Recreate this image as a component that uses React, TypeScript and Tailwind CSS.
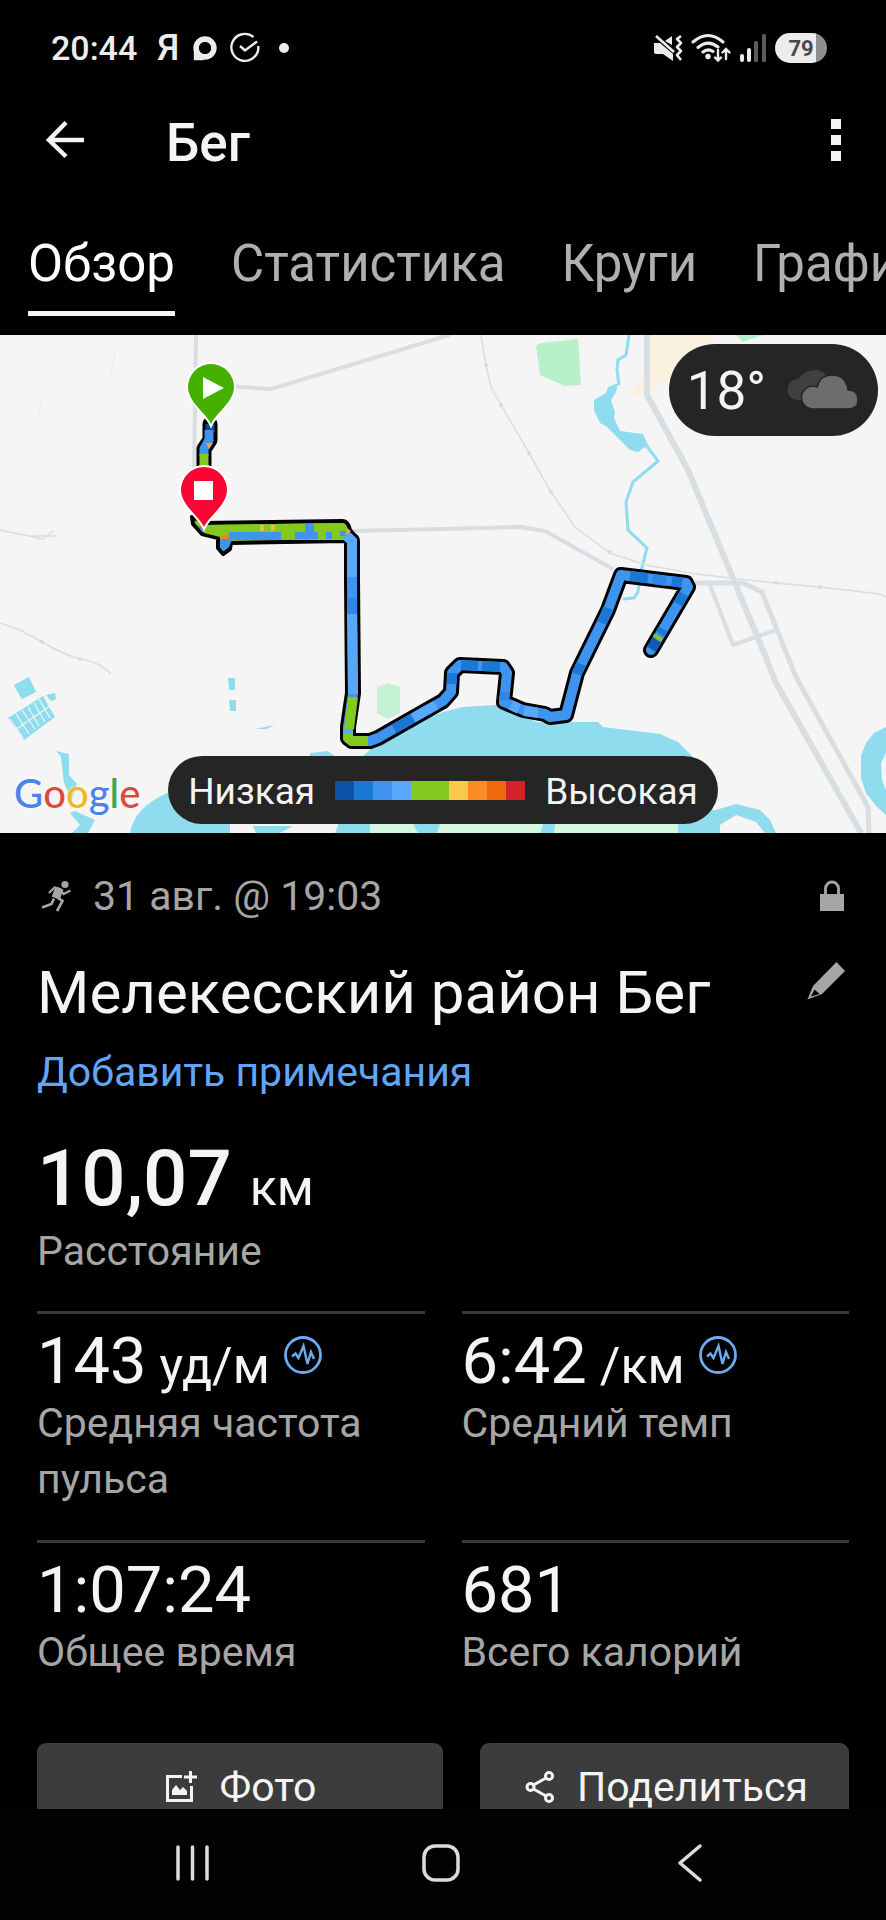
import React, { ReactNode } from "react"

const tabs = ["Обзор", "Статистика", "Круги", "Графики"]

const legendColors = [
    "#0b51a8", "#1b77d4", "#3e94ef", "#57a8fb", "#84c91f",
    "#84c91f", "#fbc94a", "#fb8c25", "#ec6a0c", "#d32226",
]

const route =
    "352,541 352,580 353,693 348,727 348,738 352,741 370,741 378,738 443,701 451,692 452,673 460,665 503,667 507,673 504,702 523,710 545,714 550,717 566,715 577,673 608,610 618,583 621,575 686,583 688,587 651,650"

const routeParts: [string, string][] = [
    ["352,545 352,577", "#57a8fb"],
    ["352,598 352,614", "#2f86e4"],
    ["352,614 353,694", "#57a8fb"],
    ["353,697 349,729", "#84c91f"],
    ["348,729 348,734", "#57a8fb"],
    ["348,734 348,738 352,741 368,741", "#84c91f"],
    ["394,729 413,718", "#1b77d4"],
    ["413,718 436,705", "#57a8fb"],
    ["452,684 452,673", "#1b77d4"],
    ["461,665 478,666", "#1b77d4"],
    ["482,666 500,667", "#1b77d4"],
    ["505,692 504,700", "#2f86e4"],
    ["511,705 519,709", "#57a8fb"],
    ["524,711 538,713", "#57a8fb"],
    ["577,674 581,664", "#1b77d4"],
    ["602,623 608,608", "#1b77d4"],
    ["630,576 648,578", "#1b77d4"],
    ["653,579 666,581", "#2f86e4"],
    ["672,581 682,583", "#1b77d4"],
    ["684,594 678,604", "#1b77d4"],
    ["663,629 660,634", "#1b77d4"],
    ["659,636 657,639", "#84c91f"],
    ["657,640 651,649", "#0f5bb5"],
]

const Track: React.FC = () => (
    <g fill="none" strokeLinejoin="round" strokeLinecap="round">
        <path d="M210 424V440L204 449V475" stroke="#000" strokeWidth="15" />
        <path d="M192 517L203 523L343 521Q348 521 350 530L357 538V545L346 541L231 543L230 549L223 554L218 548V538L202 534L193 524Z" fill="#84c91f" stroke="#000" strokeWidth="4" />
        <polyline points={route} stroke="#000" strokeWidth="16" />
        <polyline points={route} stroke="#3e94ef" strokeWidth="10" />
        {routeParts.map(([points, color]) => (
            <polyline key={points} points={points} stroke={color} strokeWidth="10" strokeLinecap="butt" />
        ))}
        <path d="M210 424V432" stroke="#10498f" strokeWidth="9" strokeLinecap="butt" />
        <path d="M209 430V440L204 449V456" stroke="#3e94ef" strokeWidth="9" strokeLinecap="butt" />
        <path d="M204 454V475" stroke="#84c91f" strokeWidth="9" strokeLinecap="butt" />
        <path d="M206 443H213L209 449Z" fill="#f2a646" />
        <path d="M195 520L206 525L343 523L348 532L345 540H231L220 537L204 533Z" fill="#84c91f" />
        <path d="M342 539L349 531L357 539V548H347V543Z" fill="#57a8fb" />
        <path d="M229 532H281V540H232L229 547L223 551L220 547V539H229Z" fill="#3e94ef" />
        <path d="M295 532H318V539H295ZM305 524H314V532H305ZM326 532H332V539H326ZM340 531H347V536H340Z" fill="#3e94ef" />
        <path d="M260 525H264V531H260ZM271 525H275V531H271Z" fill="#e5bd45" />
        <path d="M221 536L229 535V539H221Z" fill="#f07f2c" />
        <path d="M347 528L351 531L345 536Z" fill="#f2a646" />
        <path d="M198 526L206 528L202 532Z" fill="#5b8fc0" />
    </g>
)

const Pin: React.FC<{ x: number; y: number; color: string; children: ReactNode }> = ({ x, y, color, children }) => (
    <g transform={`translate(${x} ${y})`}>
        <path d="M0 1C-5 -10 -23 -21 -23 -36A23 23 0 1 1 23 -36C23 -21 5 -10 0 1Z" fill={color} stroke="#fff" strokeWidth="4" paintOrder="stroke" />
        {children}
    </g>
)

const MapCanvas: React.FC = () => (
    <svg className="block h-full w-full" viewBox="0 335 886 498" preserveAspectRatio="xMidYMid slice" role="img" aria-label="Карта">
        <rect y="335" width="886" height="498" fill="#f5f5f5" />

        <path d="M651 335H716L700 355L675 375L645 397L630 394L646 373Z" fill="#fbf1df" />
        <path d="M736 335H763L743 342ZM536 346L541 343L578 339L581 385L565 386L540 375Z" fill="#b7f0c9" />
        <path d="M377 687L388 683L400 687V713L388 719L377 713Z" fill="#c3f1d2" />

        <g fill="#8fdcee">
            <path d="M608 387L618 383L616 392L611 400L615 412L614 418L620 431L643 434L648 445L638 452L630 450L606 426L600 423L594 410V400L606 393Z" />
            <path d="M350 833V770L363 756L373 747L393 733L443 712L463 707L496 705L536 722L598 722L603 727L660 734L678 742L693 757L700 780V833Z" />
            <path d="M130 833Q134 808 167 793L230 770V833ZM253 826H293L280 833H256ZM335 833L340 820H370V833ZM310 753L328 751L336 757H310Z" />
            <path d="M56 751L69 754V775L77 784L72 800L64 783L61 757ZM70 813L75 811L95 820L88 833H72L80 825Z" />
            <path d="M14 685L29 677L36 692L22 699L17 691ZM46 695L55 693L56 699L51 701Z" />
            <path d="M8 718L43 696L55 717L24 740Z" />
            <path d="M228 678H235V690H229ZM229 700H236V711H230ZM255 729L270 726L275 725L266 729Z" />
            <path d="M886 727L874 733L866 743L861 756V778L866 793L876 806L886 815V790L882 780L881 763L886 753Z" />
            <path d="M700 810H716L736 804L760 810L770 820L776 833H765L756 822L736 815L720 825V833H678V815Z" />
        </g>
        <path d="M10 719L23 738M16 714L29 734M22 710L35 729M28 707L39 726M34 703L45 722M39 699L50 718M15 730L50 706" fill="none" stroke="#f5f5f5" strokeWidth="1.2" />
        <path d="M370 824H413L418 833H370ZM437 833L440 824H543L540 833ZM555 824H678V833H554Z" fill="#d3f7df" />

        <g fill="none" stroke="#8fdcee" strokeWidth="3">
            <path d="M629 335L626 355L618 360L617 370L619 385" />
            <path d="M646 445L658 461L633 482L626 502L628 530L647 548L640 575L638 592L634 598L623 599" />
        </g>

        <g fill="none" stroke="#dcdcdc" strokeWidth="1.5">
            <path d="M481 335L486 365L491 387L501 405L529 453L551 492L575 527L610 553L646 565L696 574L776 583L820 587L880 594L886 597" />
            <path d="M0 623L20 630L42 642Q62 654 80 659Q100 662 111 674" />
            <path d="M0 530L43 539L53 531M30 536L56 536" />
            <path d="M115 353L111 375M43 397L37 418" stroke="#ececec" />
        </g>
        <g fill="#dadada">
            <circle cx="486" cy="365" r="2" />
            <circle cx="501" cy="405" r="2" />
            <circle cx="529" cy="453" r="2" />
            <circle cx="551" cy="492" r="2" />
            <circle cx="610" cy="552" r="2" />
            <circle cx="776" cy="583" r="2" />
            <circle cx="820" cy="587" r="2" />
            <circle cx="42" cy="642" r="2" />
            <circle cx="80" cy="659" r="2" />
        </g>

        <g fill="none" stroke="#d8dee1" strokeWidth="4" strokeLinejoin="round">
            <path d="M196 335L194 470M225 386L271 389L443 337L450 335" />
            <path d="M352 531L443 529L520 527L545 531L613 569" stroke="#d6dde3" />
            <path d="M647 335V395L688 470L735 583L760 643L776 683L861 833" strokeWidth="6" />
            <path d="M695 583H743L762 592L796 677L868 807L869 833" strokeWidth="5" />
            <path d="M710 585L733 645L776 630" strokeWidth="4" />
        </g>

        <Track />
        <Pin x={211} y={423} color="#46b000">
            <path d="M-8 -46V-24L13 -35Z" fill="#fff" />
        </Pin>
        <Pin x={204} y={526} color="#fb0534">
            <path d="M-10 -45H9V-26H-10Z" fill="#fff" />
        </Pin>
    </svg>
)

const StatusBar: React.FC = () => (
    <div className="flex h-24 shrink-0 items-center justify-between pr-[59px] pl-[51px] text-[#ececec]">
        <div className="flex items-center">
            <span className="text-[34px] font-medium">20:44</span>
            <span className="ml-5 text-[36px] leading-none font-medium">Я</span>
            <svg className="ml-3 size-[28px]" viewBox="0 0 30 30" fill="none" stroke="currentColor">
                <circle cx="15" cy="15" r="9.5" strokeWidth="6" />
                <path d="M3 16V28H14Z" fill="currentColor" stroke="none" />
                <circle cx="15" cy="15" r="6.5" fill="#000" stroke="none" />
            </svg>
            <svg className="ml-[10px] size-[32px]" viewBox="0 0 32 32" fill="none" stroke="currentColor" strokeWidth="2.4">
                <path d="M24.500 5A13.500 13.500 0 1 0 29.300 14" />
                <path d="M11 14L16 18.500L28 9.500" />
            </svg>
            <span className="ml-[18px] size-[10px] rounded-full bg-[#ececec]" />
        </div>
        <div className="flex items-center gap-2">
            <svg className="h-[30px] w-[30px]" viewBox="0 0 30 30" fill="currentColor">
                <path d="M1 10H7L20 21V28L10 21H3Q1 21 1 19ZM19 3V12L12 8Z" />
                <path d="M3 3L21 19" stroke="currentColor" strokeWidth="2.600" />
                <path d="M28 3L24 6L28 10L24 14L28 18L24 22L28 27" fill="none" stroke="currentColor" strokeWidth="2.600" strokeLinejoin="round" />
            </svg>
            <svg className="h-[30px] w-[40px]" viewBox="0 0 40 30" fill="none" stroke="currentColor" strokeWidth="3" strokeLinecap="round">
                <path d="M2 9Q17 -4 32 9M7 14.500Q17 6 27 14M12 19Q17 15 22 18.500" />
                <circle cx="17" cy="23.500" r="2.700" fill="currentColor" stroke="none" />
                <path d="M27 17V27M24 24.500L27 27.500L30 24.500M35 26V16.500M31.500 19.500L35 16L38.500 19.500" strokeWidth="2.400" />
            </svg>
            <svg className="h-[30px] w-[28px]" viewBox="0 0 28 30" fill="currentColor">
                <rect x="1" y="21" width="4" height="8" rx="2" />
                <rect x="8" y="15" width="4" height="14" rx="2" />
                <rect x="15" y="8" width="4" height="21" rx="1.500" fill="#5c5c5c" />
                <rect x="23" y="1" width="4" height="28" rx="1.500" fill="#5c5c5c" />
            </svg>
            <span className="flex h-[30px] w-[52px] items-center justify-center rounded-full bg-linear-to-r from-[#ececec] from-79% to-[#8f8f8f] to-79% text-[22px] font-bold text-[#4a4a4a]">
                79
            </span>
        </div>
    </div>
)

const PulseBadge: React.FC = () => (
    <svg className="mt-[9px] size-[38px] shrink-0" viewBox="0 0 38 38" fill="none" stroke="#6cabf0">
        <circle cx="19" cy="19" r="17.500" strokeWidth="2.800" />
        <path d="M8 20.500L11.500 17.500L14.500 22L19.500 10L23.500 28L27 16L30 23" strokeWidth="2.400" strokeLinejoin="miter" />
    </svg>
)

interface StatProps {
    value: string
    unit?: string
    label: string
    badge?: boolean
}

const Stat: React.FC<StatProps> = ({ value, unit, label, badge }) => (
    <div className="border-t-[3px] border-[#383838] pt-[13px] pb-[33px]">
        <div className="flex gap-[14px]">
            <p className="text-[65px] leading-[68px]">
                {value}
                {unit && <span className="ml-[13px] text-[50px] leading-none">{unit}</span>}
            </p>
            {badge && <PulseBadge />}
        </div>
        <p className="text-[41px] leading-[56px] text-[#a6a6a6]">{label}</p>
    </div>
)

const App: React.FC = () => (
    <div className="flex h-screen flex-col overflow-hidden bg-black font-['Roboto',sans-serif] text-[#f4f4f4]">
        <StatusBar />

        <header className="flex h-[88px] shrink-0 items-center pr-[37px] pl-[44px]">
            <button type="button" aria-label="Назад">
                <svg className="size-[42px]" viewBox="0 0 42 42" fill="none" stroke="currentColor" strokeWidth="4.500">
                    <path d="M22 3.500L5 21L22 37.500M5 21H40" />
                </svg>
            </button>
            <h1 className="ml-20 pt-[6px] text-[53px] leading-[60px] font-medium">Бег</h1>
            <button type="button" aria-label="Меню" className="ml-auto flex flex-col gap-[6px] px-2">
                <span className="size-[10px] bg-[#f4f4f4]" />
                <span className="size-[10px] bg-[#f4f4f4]" />
                <span className="size-[10px] bg-[#f4f4f4]" />
            </button>
        </header>

        <nav className="flex shrink-0 gap-[56px] overflow-hidden pt-[50px] pb-[19px] pl-7">
            {tabs.map((tab, i) => (
                <button
                    key={tab}
                    type="button"
                    className={
                        "shrink-0 border-b-[5px] pb-[17px] text-[51px] leading-[60px] " +
                        (i === 0 ? "border-[#f4f4f4] text-white" : "border-transparent text-[#b0b0b0]")
                    }
                >
                    {tab}
                </button>
            ))}
        </nav>

        <main className="min-h-0 flex-1 overflow-hidden">
            <section className="relative h-[498px]">
                <MapCanvas />
                <div className="absolute top-[9px] right-2 flex h-[92px] items-center gap-5 rounded-full bg-[#252525] px-[18px]">
                    <span className="pt-1 text-[53px]">18°</span>
                    <svg className="h-[42px] w-[74px]" viewBox="0 0 74 42">
                        <path d="M12 31A10.500 10.500 0 0 1 12 10Q19 1 29 1Q38 1 42 9L20 31Z" fill="#404040" />
                        <path d="M27 40A11.500 11.500 0 0 1 27 17Q29 17 31 18Q34 6 46 6Q60 6 62 21Q72 21 72 31Q72 40 62 40Z" fill="#6d6d6d" stroke="#252525" strokeWidth="1.500" />
                    </svg>
                </div>
                <a href="#google" className="absolute bottom-[10px] left-[14px] flex font-['Lato',sans-serif] text-[40px] leading-[60px] font-medium [text-shadow:0_0_3px_#fff]">
                    <span className="text-[#4a84e8]">G</span>
                    <span className="text-[#dc4a3f]">o</span>
                    <span className="text-[#f2b81d]">o</span>
                    <span className="text-[#4a84e8]">g</span>
                    <span className="text-[#3aa757]">l</span>
                    <span className="text-[#dc4a3f]">e</span>
                </a>
                <div className="absolute inset-x-0 bottom-[9px] flex justify-center">
                    <div className="flex h-[68px] items-center gap-5 rounded-full bg-[#252525] px-5 text-[37px]">
                        <span className="pt-1">Низкая</span>
                        <div className="flex">
                            {legendColors.map((color, i) => (
                                <span key={i} className="h-[19px] w-[19px]" style={{ backgroundColor: color }} />
                            ))}
                        </div>
                        <span className="pt-1">Высокая</span>
                    </div>
                </div>
            </section>

            <section className="px-[37px] pt-[35px]">
                <div className="flex items-center text-[41px] leading-[56px] text-[#a6a6a6]">
                    <svg className="ml-1 h-[32px] w-[32px]" viewBox="0 0 32 32" fill="none" stroke="currentColor">
                        <circle cx="24" cy="4.500" r="3.600" fill="currentColor" stroke="none" />
                        <path d="M8 13L13.500 7.500L19 9L22.500 14L29.500 10.500" strokeWidth="2.200" />
                        <path d="M15 8L21 10L18.500 18L12 16Z" fill="currentColor" strokeWidth="2" />
                        <path d="M14 16L21.500 21L16 31" strokeWidth="2.600" />
                        <path d="M13 18.500L10.500 24L1 27.500" strokeWidth="2.600" />
                    </svg>
                    <span className="ml-5">31 авг. @ 19:03</span>
                    <svg className="mr-1 ml-auto h-[32px] w-[26px]" viewBox="0 0 26 32" fill="none">
                        <path d="M6.500 15V8.500A6.500 6.500 0 0 1 19.500 8.500V15" stroke="currentColor" strokeWidth="2.800" />
                        <rect x="1" y="14" width="24" height="17" fill="currentColor" />
                    </svg>
                </div>

                <div className="mt-[34px] flex items-start justify-between">
                    <h2 className="text-[60px] leading-[70px]">Мелекесский район Бег</h2>
                    <button type="button" aria-label="Изменить" className="mr-1 pt-1 text-[#a6a6a6]">
                        <svg className="size-[38px]" viewBox="0 0 38 38">
                            <path d="M29.500 0L38 9L15 32L0.500 37.500L6 24Z" fill="currentColor" />
                            <path d="M7.500 27.500L12.500 32L4 34.500Z" fill="#000" />
                        </svg>
                    </button>
                </div>
                <a href="#notes" className="mt-4 block text-[41px] leading-[56px] text-[#61a6f6]">
                    Добавить примечания
                </a>

                <p className="mt-[35px] text-[78px] leading-[88px] font-medium">
                    10,07
                    <span className="ml-[18px] text-[50px] leading-none font-normal">км</span>
                </p>
                <p className="text-[41px] leading-[56px] text-[#a6a6a6]">Расстояние</p>

                <div className="mt-8 grid grid-cols-2 gap-x-[37px]">
                    <Stat value="143" unit="уд/м" label="Средняя частота пульса" badge />
                    <Stat value="6:42" unit="/км" label="Средний темп" badge />
                    <Stat value="1:07:24" label="Общее время" />
                    <Stat value="681" label="Всего калорий" />
                </div>
            </section>

            <div className="mt-[30px] flex text-[41px] leading-[56px]">
                <div className="w-1/2 pl-[37px]">
                    <button type="button" className="flex w-full items-center justify-center gap-[22px] rounded-[9px] bg-[#3c3c3c] py-4">
                        <svg className="size-[34px]" viewBox="0 0 34 34" fill="none" stroke="currentColor" strokeWidth="3">
                            <path d="M18 6.500H3.500V30.500H27.500V16M26.500 1V13M20 7H33" />
                            <path d="M8 25V20L12 15L16 20L19 17L23 21V25Z" fill="currentColor" stroke="none" />
                        </svg>
                        Фото
                    </button>
                </div>
                <div className="w-1/2 px-[37px]">
                    <button type="button" className="flex w-full items-center justify-center gap-[22px] rounded-[9px] bg-[#3c3c3c] py-4">
                        <svg className="h-[34px] w-[34px]" viewBox="-4 0 34 34" fill="none" stroke="currentColor" strokeWidth="3">
                            <circle cx="5.500" cy="17" r="3.500" />
                            <circle cx="24" cy="6" r="3.500" />
                            <circle cx="24" cy="28" r="3.500" />
                            <path d="M8.500 15L21 8M8.500 19L21 26" />
                        </svg>
                        Поделиться
                    </button>
                </div>
            </div>
        </main>

        <footer className="flex h-[111px] shrink-0 items-center justify-between bg-[#020202] pr-[182px] pb-1 pl-[174px] text-[#dcdcdc]">
            <button type="button" aria-label="Недавние">
                <svg className="h-[40px] w-[36px]" viewBox="0 0 36 40" fill="none" stroke="currentColor" strokeWidth="3.500" strokeLinecap="round">
                    <path d="M4 4V36M18.500 4V36M33 4V36" />
                </svg>
            </button>
            <button type="button" aria-label="Главный экран">
                <svg className="size-[40px]" viewBox="0 0 40 40" fill="none" stroke="currentColor" strokeWidth="3.500">
                    <rect x="3" y="3" width="34" height="34" rx="11" />
                </svg>
            </button>
            <button type="button" aria-label="Назад">
                <svg className="h-[40px] w-[32px]" viewBox="0 0 32 40" fill="none" stroke="currentColor" strokeWidth="3.500" strokeLinecap="round" strokeLinejoin="round">
                    <path d="M28 3L8 20L28 37" />
                </svg>
            </button>
        </footer>
    </div>
)

export default App
